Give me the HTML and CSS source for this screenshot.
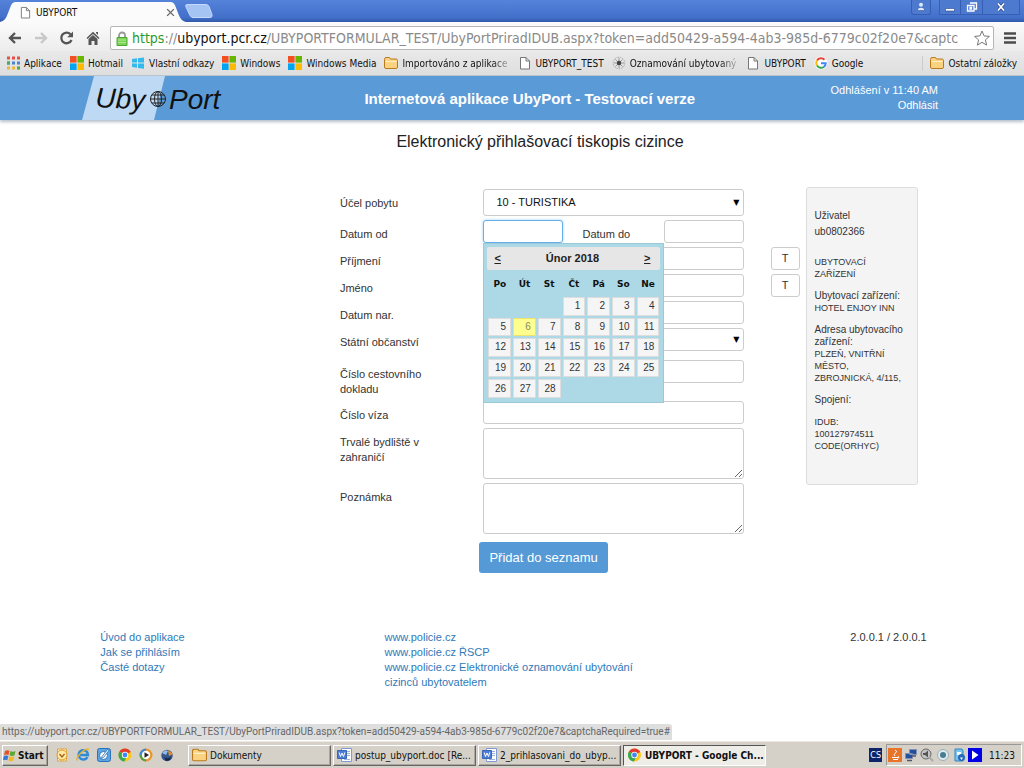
FILE: index.html
```html
<!DOCTYPE html>
<html lang="cs">
<head>
<meta charset="utf-8">
<title>UBYPORT</title>
<link rel="stylesheet" href="styles.css">
</head>
<body>
<svg class="defs" aria-hidden="true">
  <defs>
    <symbol id="doc" viewBox="0 0 12 14"><path d="M1.500 1.500h5.500l3.500 3.500v8h-9z" fill="#fff" stroke="#777"/><path d="M7 1.500v3.500h3.500" fill="none" stroke="#777"/></symbol>
    <symbol id="folder" viewBox="0 0 14 12"><path d="M.5 2.500q0-2 1.500-2h3.500l1 1.500h5.500q1.500 0 1.500 1.500v6.500q0 1.500-1.500 1.500H2Q.5 11.500.5 10z" fill="#fbd27f" stroke="#b9791f"/><path d="M1.500 4.500h11" stroke="#fff0c5"/></symbol>
    <symbol id="win" viewBox="0 0 14 14"><path d="M0 0h6.600v6.600H0z" fill="#f25022"/><path d="M7.400 0H14v6.600H7.400z" fill="#67b700"/><path d="M0 7.400h6.600V14H0z" fill="#00a4ef"/><path d="M7.400 7.400H14V14H7.400z" fill="#ffb900"/></symbol>
    <symbol id="chrome" viewBox="0 0 14 14"><circle cx="7" cy="7" r="6.500" fill="#fbc81d"/><path d="M7 7 1.400 3.600A6.500 6.500 0 0 1 12.700 4z" fill="#e33b2e"/><path d="M7 7 1.400 3.600A6.500 6.500 0 0 0 6.400 13.500L9 8.500z" fill="#38a852"/><circle cx="7" cy="7" r="3.200" fill="#fff"/><circle cx="7" cy="7" r="2.400" fill="#4285f4"/></symbol>
    <symbol id="word" viewBox="0 0 15 14"><path d="M4.500.5h10v13h-10z" fill="#fff" stroke="#7f9bd0"/><path d="M10 3.500h3M10 5.500h3M10 7.500h3M7 11.500h6" stroke="#9bb2de"/><path d="M.5 2.500h9v8h-9z" fill="#4d7dd6" stroke="#3a66b8"/><path d="m2.200 4.500 1.300 4L5 5l1.500 3.500 1.300-4" fill="none" stroke="#fff"/></symbol>
  </defs>
</svg>

<div class="titlebar">
  <div class="tab">
    <svg class="tab-shape" viewBox="0 0 194 20" preserveAspectRatio="none"><path d="M0 20q5-1 7-6l4-10q1.500-4 5-4h158q3.500 0 5 4l4 10q2 5 7 6z" fill="#fbfbfb"/></svg>
    <svg class="doc-icon" viewBox="0 0 12 14"><use href="#doc"/></svg>
    <span class="tab-title">UBYPORT</span>
    <button class="tab-close" type="button" aria-label="Zavřít kartu"><svg viewBox="0 0 8 8"><path d="m1 1 6 6M7 1 1 7" stroke="#666" stroke-width="1.200"/></svg></button>
  </div>
  <button class="new-tab" type="button" aria-label="Nová karta"><svg viewBox="0 0 28 14"><path d="M2 .5h19q2 0 3 2l3 8q.7 3-2 3H8q-2 0-3-2L1 3Q0 .5 2 .5z" fill="#a5c3f3" stroke="#c4d9fa"/></svg></button>
  <div class="window-buttons">
    <button type="button" class="user-button" aria-label="Uživatel"><svg viewBox="0 0 10 10"><circle cx="5" cy="2.700" r="2" fill="#dce9ff"/><path d="M1.500 8.500V7Q5 3.500 8.500 7v1.500z" fill="#dce9ff" stroke="#27458e" stroke-width=".5"/></svg></button>
    <button type="button" aria-label="Minimalizovat"><svg viewBox="0 0 12 10"><path d="M1.500 6.500h9v2.500h-9z" fill="#fff" stroke="#27458e" stroke-width=".6"/></svg></button>
    <button type="button" aria-label="Obnovit"><svg viewBox="0 0 12 10"><path d="M4 1h6.500v6H8M1.500 3.500H8V9H1.500zM4 5.500h1.500v1.500H4z" fill="none" stroke="#fff" stroke-width="1.300"/></svg></button>
    <button type="button" class="close-button" aria-label="Zavřít"><svg viewBox="0 0 12 10"><path d="m3 1.500 6 7m0-7-6 7" stroke="#27458e" stroke-width="3"/><path d="m3 1.500 6 7m0-7-6 7" stroke="#fff" stroke-width="1.800"/></svg></button>
  </div>
</div>

<div class="toolbar">
  <button class="nav-button" type="button" aria-label="Zpět"><svg viewBox="0 0 16 14"><path d="M8 2 3 7l5 5M3 7h11" fill="none" stroke="#555" stroke-width="2.400"/></svg></button>
  <button class="nav-button" type="button" aria-label="Vpřed"><svg viewBox="0 0 16 14"><path d="m8 2 5 5-5 5M13 7H2" fill="none" stroke="#c8c8c8" stroke-width="2.400"/></svg></button>
  <button class="nav-button" type="button" aria-label="Obnovit stránku"><svg viewBox="0 0 16 14"><path d="M12.500 9A5.300 5.300 0 1 1 11.500 3.300" fill="none" stroke="#555" stroke-width="2.300"/><path d="M14 .5v5.800H8.200z" fill="#555"/></svg></button>
  <button class="nav-button" type="button" aria-label="Domů"><svg viewBox="0 0 16 14"><path d="M8 .8 14.500 7l-1 1L8 3 2.500 8l-1-1zM11 1h2v3l-2-2zM3.500 8 8 4l4.500 4v6h-3v-4h-3v4h-3z" fill="#555"/></svg></button>
  <div class="address">
    <svg class="lock" viewBox="0 0 12 15"><path d="M3 7V4.500a3 3 0 0 1 6 0V7" fill="none" stroke="#9a9a9a" stroke-width="1.800"/><path d="M1 6.500h10v8H1z" fill="#7ed45b" stroke="#4da631"/><path d="M2 9h8M2 11.500h8" stroke="#a9ea8c"/></svg>
    <div class="url" role="textbox" aria-label="Adresa"><span class="scheme">https</span><span>://</span><span class="host">ubyport.pcr.cz</span><span>/UBYPORTFORMULAR_TEST/UbyPortPriradIDUB.aspx?token=add50429-a594-4ab3-985d-6779c02f20e7&amp;captc</span></div>
    <svg class="star" viewBox="0 0 16 16"><path d="m8 1 2.100 4.900 5.300.5-4 3.500 1.200 5.200L8 12.300 3.400 15.100l1.200-5.200-4-3.500 5.300-.5z" fill="#fff" stroke="#777"/></svg>
  </div>
  <button class="menu-button" type="button" aria-label="Nabídka"><svg viewBox="0 0 12 12"><path d="M0 1.500h12M0 6h12M0 10.500h12" stroke="#4c4c4c" stroke-width="2.600"/></svg></button>
</div>

<nav class="bookmarks">
  <a href="#"><svg viewBox="0 0 14 14"><g stroke-width="3" stroke-dasharray="3 2"><path d="M1 2h13" stroke="#e25046"/><path d="M1 7h13" stroke="#4a86cf"/><path d="M1 12h13" stroke="#e9b83c"/></g><path d="M1 5.500h3v3H1zM11 10.500h3v3h-3z" fill="#4cab58"/></svg>Aplikace</a>
  <a href="#"><svg viewBox="0 0 14 14"><use href="#win"/></svg>Hotmail</a>
  <a href="#"><svg viewBox="0 0 14 14"><path d="m1 3 5-.7v4.200H1zM7 2.200l6-.8v5.100H7zM1 7.500h5v4.300L1 11zM7 7.500h6v5.200l-6-.8z" fill="#33b9ee"/></svg>Vlastní odkazy</a>
  <a href="#"><svg viewBox="0 0 14 14"><use href="#win"/></svg>Windows</a>
  <a href="#"><svg viewBox="0 0 14 14"><use href="#win"/></svg>Windows Media</a>
  <a href="#"><svg viewBox="0 0 14 12"><use href="#folder"/></svg><span class="fade">Importováno z aplikace</span></a>
  <a href="#"><svg viewBox="0 0 12 14"><use href="#doc"/></svg>UBYPORT_TEST</a>
  <a href="#"><svg viewBox="0 0 14 14"><circle cx="7" cy="7" r="5.800" fill="none" stroke="#aaa" stroke-dasharray="1.500 1"/><path d="M7 2v10M2 7h10M3.500 3.500l7 7M10.500 3.500l-7 7" stroke="#999"/><circle cx="7" cy="7" r="2.200" fill="#444"/></svg><span class="fade">Oznamování ubytovaný</span></a>
  <a href="#"><svg viewBox="0 0 12 14"><use href="#doc"/></svg>UBYPORT</a>
  <a href="#"><svg viewBox="0 0 14 14"><circle cx="7" cy="7" r="6.500" fill="#fff"/><g fill="none" stroke-width="2"><path d="M3 4.500A4.700 4.700 0 0 1 10.500 3.700" stroke="#ea4335"/><path d="M3 4.500a4.700 4.700 0 0 0 0 5" stroke="#fbbc05"/><path d="M3 9.500a4.700 4.700 0 0 0 7 1.200" stroke="#34a853"/><path d="M10 10.700A4.700 4.700 0 0 0 11.700 7.200H7" stroke="#4285f4"/></g></svg>Google</a>
  <a class="other" href="#"><svg viewBox="0 0 14 12"><use href="#folder"/></svg>Ostatní záložky</a>
</nav>

<div class="page">
  <header class="header">
    <a class="logo" href="#" aria-label="UbyPort">
      <svg viewBox="0 0 148 44"><path d="M12 0h71L72 44H0z" fill="#bdd9f3"/><text class="logo-text" x="13" y="31" transform="rotate(3 13 31)">Uby</text><text class="logo-text" x="87" y="33">Port</text><g fill="none" stroke="#222"><circle cx="76" cy="23" r="7.500"/><ellipse cx="76" cy="23" rx="3.500" ry="7.500"/><path d="M68.500 23h15M76 15.500v15M70 19h12M70 27h12"/></g></svg>
    </a>
    <h1 class="app-title">Internetová aplikace UbyPort - Testovací verze</h1>
    <div class="session"><span>Odhlášení v 11:40 AM</span><a href="#">Odhlásit</a></div>
  </header>

  <h2 class="form-title">Elektronický přihlašovací tiskopis cizince</h2>

  <main class="main">
    <form class="form">
      <div class="row">
        <label for="purpose">Účel pobytu</label>
        <div class="select-box tall"><select id="purpose"><option>10 - TURISTIKA</option></select></div>
      </div>
      <div class="row">
        <label for="from">Datum od</label>
        <div class="dates">
          <input id="from" class="focused" type="text">
          <label for="to">Datum do</label>
          <input id="to" type="text">
          <div class="calendar">
            <div class="calendar-head"><a href="#">&lt;</a><span>Únor 2018</span><a href="#">&gt;</a></div>
            <table>
              <thead><tr><th>Po</th><th>Út</th><th>St</th><th>Čt</th><th>Pá</th><th>So</th><th>Ne</th></tr></thead>
              <tbody>
                <tr><td class="empty"></td><td class="empty"></td><td class="empty"></td><td>1</td><td>2</td><td>3</td><td>4</td></tr>
                <tr><td>5</td><td class="today">6</td><td>7</td><td>8</td><td>9</td><td>10</td><td>11</td></tr>
                <tr><td>12</td><td>13</td><td>14</td><td>15</td><td>16</td><td>17</td><td>18</td></tr>
                <tr><td>19</td><td>20</td><td>21</td><td>22</td><td>23</td><td>24</td><td>25</td></tr>
                <tr><td>26</td><td>27</td><td>28</td><td class="empty"></td><td class="empty"></td><td class="empty"></td><td class="empty"></td></tr>
              </tbody>
            </table>
          </div>
        </div>
      </div>
      <div class="row"><label for="surname">Příjmení</label><input id="surname" type="text"><button class="t-button" type="button">T</button></div>
      <div class="row"><label for="name">Jméno</label><input id="name" type="text"><button class="t-button" type="button">T</button></div>
      <div class="row"><label for="birth">Datum nar.</label><input id="birth" type="text"></div>
      <div class="row spaced"><label for="state">Státní občanství</label><div class="select-box"><select id="state"><option></option></select></div></div>
      <div class="row"><label for="passport">Číslo cestovního dokladu</label><input id="passport" type="text"></div>
      <div class="row"><label for="visa">Číslo víza</label><input id="visa" type="text"></div>
      <div class="row"><label for="residence">Trvalé bydliště v zahraničí</label><textarea id="residence"></textarea></div>
      <div class="row"><label for="note">Poznámka</label><textarea id="note"></textarea></div>
      <div class="row actions"><button class="submit" type="button">Přidat do seznamu</button></div>
    </form>

    <aside class="sidebar">
      <p class="user">Uživatel<br>ub0802366</p>
      <p class="caps">UBYTOVACÍ ZAŘÍZENÍ</p>
      <p>Ubytovací zařízení:<br><span class="caps">HOTEL ENJOY INN</span></p>
      <p>Adresa ubytovacího zařízení:<br><span class="caps">PLZEŇ, VNITŘNÍ MĚSTO,<br>ZBROJNICKÁ, 4/115,</span></p>
      <p>Spojení:</p>
      <p class="caps">IDUB:<br>100127974511<br>CODE(ORHYC)</p>
    </aside>
  </main>

  <footer class="footer">
    <div><a href="#">Úvod do aplikace</a><a href="#">Jak se přihlásím</a><a href="#">Časté dotazy</a></div>
    <div class="external"><a href="#">www.policie.cz</a><a href="#">www.policie.cz ŘSCP</a><a href="#">www.policie.cz Elektronické oznamování ubytování cizinců ubytovatelem</a></div>
    <div class="version">2.0.0.1 / 2.0.0.1</div>
  </footer>
  <div class="status">https://ubyport.pcr.cz/UBYPORTFORMULAR_TEST/UbyPortPriradIDUB.aspx?token=add50429-a594-4ab3-985d-6779c02f20e7&amp;captchaRequired=true#</div>
</div>

<div class="taskbar">
  <button class="start" type="button"><svg viewBox="0 0 14 14"><path d="M2 3q2-1.500 4.500-.3L5.500 7Q3 6 1 7.300z" fill="#e5512b"/><path d="M7.500 3q2.500 1.500 5 0l-1 4.300q-2.500 1.300-5 0z" fill="#5ca832"/><path d="M.8 8.200q2-1.300 4.500-.2l-1 4.200Q2 11-.2 12.500z" fill="#3c76d2"/><path d="M6.300 8.300q2.500 1.300 5 0l-1 4.200q-2.500 1.500-5 0z" fill="#f4b824"/></svg>Start</button>
  <div class="quick">
    <svg viewBox="0 0 14 14"><path d="M2.500 1h9v12h-9z" fill="#fff4cf" stroke="#d8a545"/><circle cx="7" cy="7" r="5" fill="#ffe9a8" stroke="#dd9b28"/><path d="m4.500 6 2.500 3 2.500-3" fill="none" stroke="#a55e16" stroke-width="1.300"/></svg>
    <svg viewBox="0 0 14 14"><path d="M11.500 9A4.700 4.700 0 1 1 12 7H4" fill="none" stroke="#2f8ad8" stroke-width="2.500"/><path d="M1.500 12.500C-1 10 8 0 13 1.500" fill="none" stroke="#e7b22e" stroke-width="1.400"/></svg>
    <svg viewBox="0 0 14 14"><rect x=".5" y=".5" width="13" height="13" rx="2" fill="#5aa5e2" stroke="#2a72b8"/><circle cx="6.500" cy="7.500" r="4" fill="#fff" stroke="#2a72b8"/><path d="m5 8.500 5.500-7 1.500 1-5.500 7-2 .7z" fill="#dff0ff" stroke="#2465a2" stroke-width=".7"/></svg>
    <svg viewBox="0 0 14 14"><use href="#chrome"/></svg>
    <svg viewBox="0 0 14 14"><circle cx="7" cy="7" r="6.500" fill="#e9952d"/><path d="M7 .5A6.500 6.500 0 0 0 .5 7H7z" fill="#3b89d8"/><path d="M7 13.500A6.500 6.500 0 0 1 .5 7H7z" fill="#52a244"/><circle cx="7" cy="7" r="4.200" fill="#fff"/><path d="M5.500 4.300v5.400L10 7z" fill="#222"/></svg>
    <svg viewBox="0 0 14 14"><circle cx="7" cy="7.500" r="5.700" fill="#35558c"/><path d="M2 5q3-4 6-2l-2 4z" fill="#8ebce9"/><path d="m8 2 5 4-4 2z" fill="#e5902d"/><path d="M4 9q4 3 7-1l-1 4-4 1z" fill="#182849"/></svg>
  </div>
  <div class="tasks">
    <button type="button"><svg viewBox="0 0 14 12"><use href="#folder"/></svg><span>Dokumenty</span></button>
    <button type="button"><svg viewBox="0 0 15 14"><use href="#word"/></svg><span>postup_ubyport.doc [Re...</span></button>
    <button type="button"><svg viewBox="0 0 15 14"><use href="#word"/></svg><span>2_prihlasovani_do_ubyp...</span></button>
    <button type="button" class="active"><svg viewBox="0 0 14 14"><use href="#chrome"/></svg><span>UBYPORT - Google Ch...</span></button>
  </div>
  <div class="lang">CS</div>
  <div class="tray">
    <svg viewBox="0 0 14 14"><path d="M0 0h14v14H0z" fill="#e8742a"/><path d="M7 2q3 1 .5 3T7 8M4 9.500h6M5 11.500h5M10 8.500q2 0 0 2" fill="none" stroke="#fff"/></svg>
    <svg viewBox="0 0 14 14"><path d="M5.500 1.500h7v5h-7zM1.500 5.500h7v5h-7z" fill="#244f9c" stroke="#7e91b6"/><path d="M3 12.500h5M8 8h4" stroke="#556" stroke-width="1.500"/></svg>
    <svg viewBox="0 0 14 14"><circle cx="6" cy="6" r="5" fill="#c4c4c4" stroke="#666"/><path d="M3 5h2l3-2.500v7L5 7H3z" fill="#555"/><path d="m9 9 4 4" stroke="#aaa" stroke-width="2"/></svg>
    <svg viewBox="0 0 14 14"><circle cx="7" cy="7" r="5.500" fill="#dcecf1" stroke="#9cb0b6"/><circle cx="7" cy="7" r="3" fill="#4b7b8e"/></svg>
    <svg viewBox="0 0 14 14"><path d="M3 1h7l1 2v10H3z" fill="#77c4ef" stroke="#3583bf"/><path d="M5 4h4v3H5z" fill="#fff"/><circle cx="9.500" cy="9.500" r="3.500" fill="#2567bb"/><path d="M8 9.500h3L9.500 12z" fill="#fff"/></svg>
    <svg viewBox="0 0 14 14"><path d="M0 0h14v14H0z" fill="#0000e6"/><path d="M4 2.500v9L10.500 7z" fill="#fff"/></svg>
    <time>11:23</time>
  </div>
</div>
</body>
</html>
```
FILE: styles.css
```css
* { box-sizing: border-box; }
html, body { height: 100%; margin: 0; }
body {
  display: flex;
  flex-direction: column;
  min-height: 100vh;
  background: #fff;
  color: #333;
  font: 11px/15px "Liberation Sans", Arial, sans-serif;
}
a { color: inherit; text-decoration: none; }
button { font: inherit; color: inherit; padding: 0; border: 0; background: none; }
svg { display: block; flex: none; }
p, h1, h2 { margin: 0; font-weight: normal; }
.defs { position: absolute; width: 0; height: 0; }

.titlebar, .toolbar, .bookmarks, .taskbar {
  font-family: "DejaVu Sans Condensed", "DejaVu Sans", sans-serif;
  font-size: 10px;
  color: #111;
}

/* window title and tabs */
.titlebar {
  flex: none;
  display: flex;
  align-items: flex-end;
  height: 22px;
  background: linear-gradient(#5583da, #4270ca 80%, #3159a9);
}
.tab {
  position: relative;
  display: flex;
  align-items: center;
  gap: 5px;
  width: 190px;
  height: 20px;
  padding: 0 15px 0 20px;
}
.tab-shape { position: absolute; inset: 0; width: 100%; height: 100%; }
.doc-icon { position: relative; width: 11px; height: 13px; }
.tab-title { position: relative; flex: 1; }
.tab-close { position: relative; }
.tab-close svg { width: 9px; height: 9px; }
.new-tab { align-self: center; margin-left: -5px; }
.new-tab svg { width: 28px; height: 14px; }
.window-buttons { align-self: flex-start; display: flex; height: 15px; margin-left: auto; margin-right: 4px; }
.window-buttons button { display: grid; place-items: center; width: 22px; border: 1px solid #355fb5; border-top: 0; background: #4d79cf; }
.window-buttons button + button { border-left: 0; }
.window-buttons .user-button { width: 20px; margin-right: 8px; border-radius: 0 0 3px 3px; }
.window-buttons .user-button + button { border-left: 1px solid #355fb5; }
.window-buttons .close-button { width: 37px; }
.window-buttons svg { width: 12px; height: 10px; }

/* navigation bar */
.toolbar {
  flex: none;
  display: flex;
  align-items: center;
  gap: 10px;
  height: 29px;
  padding: 3px 8px 0 7px;
  background: linear-gradient(#fbfbfb, #ececec);
}
.nav-button svg { width: 16px; height: 14px; }
.address {
  flex: 1;
  min-width: 0;
  display: flex;
  align-items: center;
  gap: 4px;
  height: 24px;
  margin-left: -1px;
  padding: 0 3px 0 5px;
  border: 1px solid #b5b5b5;
  border-radius: 2px;
  background: #fff;
}
.lock { width: 12px; height: 15px; }
.url { flex: 1; min-width: 0; white-space: nowrap; font-size: 14px; line-height: 22px; color: #8a8a8a; }
.scheme { color: #2b9a2b; }
.host { color: #111; }
.star { width: 16px; height: 16px; }
.menu-button svg { width: 12px; height: 12px; }

.bookmarks {
  flex: none;
  display: flex;
  align-items: center;
  gap: 8px;
  height: 25px;
  padding: 0 7px 0 6px;
  background: linear-gradient(#e9e9e9, #dedede);
  border-bottom: 1px solid #b9c3cc;
  white-space: nowrap;
}
.bookmarks a { display: flex; align-items: center; gap: 4px; }
.bookmarks svg { width: 14px; height: 14px; }
.bookmarks .other { margin-left: auto; padding-left: 7px; border-left: 1px solid #ccc; }
.fade { margin-right: 2px; -webkit-mask-image: linear-gradient(90deg, #000 85%, transparent); mask-image: linear-gradient(90deg, #000 85%, transparent 105%); }

/* web page */
.page { position: relative; flex: 1; min-height: 0; overflow: hidden; background: #fff; }
.header {
  display: grid;
  grid-template-columns: 33% 44% 1fr;
  align-items: center;
  height: 44px;
  padding: 0 8.4% 0 8%;
  background: #5a9ad7;
  box-shadow: 0 2px 3px #b5bfca;
  color: #fff;
}
.logo svg { width: 148px; height: 44px; }
.logo-text { font: italic 28px "Liberation Sans", Arial, sans-serif; fill: #111; }
.app-title { font-size: 15px; font-weight: bold; white-space: nowrap; }
.session { display: flex; flex-direction: column; align-items: flex-end; white-space: nowrap; }
.form-title { margin: 12px 0 0 56px; text-align: center; font-size: 16px; line-height: 20px; color: #222; }

.main {
  display: grid;
  grid-template-columns: 1fr 112px;
  gap: 6px;
  align-items: start;
  margin: 35px 0 0;
  padding: 0 10.4% 0 33.2%;
}
.form { display: flex; flex-direction: column; gap: 4px; padding-top: 2px; }
.row { display: grid; grid-template-columns: 143fr 260fr 55fr; align-items: start; }
.row > :nth-child(3) { justify-self: end; }
.row > label { padding: 7px 40px 0 0; }
.row.spaced { min-height: 28px; }
input, select, textarea {
  display: block;
  width: 100%;
  height: 23px;
  margin: 0;
  padding: 2px 6px;
  border: 1px solid #ccc;
  border-radius: 3px;
  background: #fff;
  color: #111;
  font: inherit;
  outline: 0;
}
textarea { height: 51px; }
.select-box { position: relative; }
.select-box::after { content: "▼"; position: absolute; right: 5px; top: 50%; transform: translateY(-50%); font: 8px/12px "DejaVu Sans", sans-serif; color: #000; pointer-events: none; }
select { appearance: none; padding-left: 12px; }
.tall select { height: 27px; }
.dates { position: relative; display: grid; grid-template-columns: 80px 1fr 80px; align-items: start; }
.dates label { padding: 7px 0 0 19px; }
.focused { border-color: #66afe9; box-shadow: 0 0 3px #9bcdf5; }
.t-button { width: 29px; height: 23px; border: 1px solid #ccc; border-radius: 3px; }
.actions { padding-top: 4px; }
.submit { grid-column: 2; justify-self: start; margin-left: -4px; padding: 0 10px; height: 31px; border-radius: 3px; background: #5599d6; color: #fff; font-size: 13px; }

.calendar {
  position: absolute;
  z-index: 2;
  top: 23px;
  left: 0;
  width: 181px;
  padding: 3px 2px 2px;
  border: 1px solid #9cc9d7;
  background: #add8e6;
}
.calendar-head {
  display: flex;
  justify-content: space-between;
  align-items: center;
  height: 23px;
  margin: 0 1px;
  padding: 0 10px 0 7px;
  border-radius: 2px;
  background: #e6e6e6;
  color: #222;
  font-weight: bold;
}
.calendar-head a { text-decoration: underline; }
.calendar table { width: 100%; height: 130px; table-layout: fixed; border-spacing: 2px; font-size: 10px; line-height: 14px; }
.calendar th { height: 23px; padding: 0; font: bold 9px "DejaVu Sans", sans-serif; color: #111; }
.calendar td { padding: 0 4px 0 0; border: 1px solid #ddd; background: #f5f5f5; text-align: right; color: #333; }
.calendar .today { border-color: #efe36c; background: #ffff90; color: #886; }
.calendar .empty { border-color: transparent; background: none; }

.sidebar {
  min-height: 298px;
  padding: 20px 8px;
  border: 1px solid #ddd;
  border-radius: 3px;
  background: #f4f4f4;
  font-size: 10px;
  line-height: 12px;
}
.sidebar p { margin-bottom: 10px; }
.sidebar .user { margin-bottom: 16px; line-height: 16px; }
.caps { font-size: 9px; }

.footer {
  display: grid;
  grid-template-columns: 284fr 445fr 97fr;
  margin-top: 57px;
  padding: 0 9.5% 0 9.8%;
  color: #333;
}
.footer a { display: block; color: #3079b9; }
.external a { max-width: 250px; }
.version { text-align: right; }
.status { position: absolute; left: 0; bottom: 1px; padding: 0 2px; border-radius: 0 3px 0 0; background: #dedede; color: #666; font-family: Roboto, "Liberation Sans", sans-serif; font-size: 10px; line-height: 16px; white-space: nowrap; }

/* taskbar */
.taskbar {
  flex: none;
  display: flex;
  align-items: center;
  height: 27px;
  padding: 0 2px;
  border-top: 1px solid #ece9e2;
  background: #d5d1c8;
}
.start, .tasks button { height: 21px; border: 1px solid; border-color: #fff #666 #666 #fff; box-shadow: inset -1px -1px #aaa69d; }
.start { display: flex; align-items: center; gap: 1px; width: 46px; font-weight: bold; }
.start svg { width: 14px; height: 14px; }
.quick { display: flex; gap: 7px; margin: 0 14px 0 7px; }
.quick svg, .tray svg { width: 14px; height: 14px; }
.tasks { flex: 1; display: grid; grid-template-columns: repeat(4, minmax(0, 143px)); gap: 2px; }
.tasks button { display: flex; align-items: center; gap: 3px; min-width: 0; padding: 0 0 0 3px; text-align: left; }
.tasks svg { width: 15px; height: 14px; }
.tasks span { white-space: nowrap; }
.tasks .active { border-color: #555 #fff #fff #555; background: #efede8; box-shadow: none; font-weight: bold; }
.lang { padding: 0 1px; background: #0b246a; color: #fff; font-size: 9px; line-height: 14px; }
.tray { display: flex; align-items: center; gap: 2px; height: 22px; margin-left: 4px; padding: 0 6px 0 1px; border: 1px solid; border-color: #999 #fff #fff #999; }
.tray time { margin-left: 5px; }
```
